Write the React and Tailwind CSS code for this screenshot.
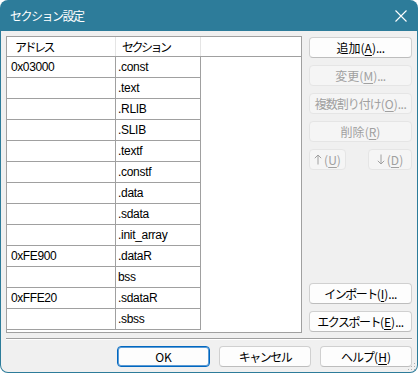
import React from 'react';

const rows = [
    ['0x03000', '.const'],
    ['', '.text'],
    ['', '.RLIB'],
    ['', '.SLIB'],
    ['', '.textf'],
    ['', '.constf'],
    ['', '.data'],
    ['', '.sdata'],
    ['', '.init_array'],
    ['0xFE900', '.dataR'],
    ['', 'bss'],
    ['0xFFE20', '.sdataR'],
    ['', '.sbss'],
];

const Arrow = ({ down }) => (
    <svg width="8" height="11" viewBox="0 0 8 11" className={`mr-[2px] ${down ? 'rotate-180' : ''}`}>
        <path d="M4 1V10.5M0.8 4.2L4 1L7.2 4.2" stroke="currentColor" strokeWidth="1" fill="none" />
    </svg>
);

const Btn = ({ label, mn, tail = '', disabled, primary, className = '', labelClass = '' }) => {
    const tone = disabled
        ? 'bg-[#f5f5f5] border-[#e5e5e5] text-[#a0a0a0]'
        : primary
            ? 'bg-[#fdfdfd] border-[#0067c0] text-black shadow-[inset_0_0_0_1px_#5b9bd5]'
            : 'bg-[#fdfdfd] border-[#d0d0d0] border-b-[#bdbdbd] text-black';
    return (
        <div className={`h-[21px] flex items-center justify-center rounded-[4px] border text-[12px] leading-none ${tone} ${className}`}>
            <span className={labelClass}>{label}</span>
            {mn && (
                <span>
                    (<span className="underline underline-offset-2">{mn}</span>)
                </span>
            )}
            {tail && <span className="tracking-[-0.5px]">{tail}</span>}
        </div>
    );
};

export default function App() {
    return (
        <div className="w-[418px] h-[373px] bg-white font-['Noto_Sans_CJK_JP',sans-serif]">
            <div className="relative w-full h-full flex flex-col bg-[#2d7c9a] rounded-[8px] px-px pb-px">
                {/* title bar */}
                <div className="h-[31px] shrink-0 flex items-center justify-between pl-[9px] pr-[9px] text-white">
                    <span className="text-[12px] tracking-[-1.5px]">セクション設定</span>
                    <svg width="12" height="12" viewBox="0 0 12 12" className="mr-px">
                        <path d="M0.5 0.5L11.5 11.5M11.5 0.5L0.5 11.5" stroke="white" strokeWidth="1.1" />
                    </svg>
                </div>

                {/* body */}
                <div className="relative flex-1 flex flex-col bg-[#f0f0f0] rounded-b-[7px] px-[5px] pt-[5px]">
                    <div className="flex gap-[7px]">
                        {/* list view */}
                        <div className="w-[296px] h-[297px] bg-white border border-[#a0a0a0] flex flex-col text-[12px] leading-none">
                            <div className="h-[20px] flex border-b border-[#a0a0a0] shrink-0">
                                <div className="w-[109px] border-r border-[#e5e5e5] flex items-center pl-[8px] tracking-[-2.5px]">アドレス</div>
                                <div className="w-[85px] border-r border-[#e5e5e5] flex items-center pl-[6px] tracking-[-2.5px]">セクション</div>
                                <div className="flex-1" />
                            </div>
                            {rows.map(([addr, sec], i) => (
                                <div key={i} className="w-[194px] h-[21px] flex border-b border-[#a0a0a0] font-['Liberation_Sans',sans-serif]">
                                    <div className="w-[109px] border-r border-[#a0a0a0] flex items-center pl-[4px] tracking-[-0.4px]">{addr}</div>
                                    <div className="w-[85px] border-r border-[#a0a0a0] flex items-center pl-[2px] tracking-[-0.3px]">{sec}</div>
                                </div>
                            ))}
                        </div>

                        {/* right buttons */}
                        <div className="w-[103px] h-[297px] flex flex-col justify-between pt-px pb-px">
                            <div className="flex flex-col gap-[7px]">
                                <Btn label="追加" mn="A" tail="..." />
                                <Btn label="変更" mn="M" tail="..." disabled />
                                <Btn label="複数割り付け" mn="O" tail="..." disabled labelClass="tracking-[-1px]" />
                                <Btn label="削除" mn="R" disabled />
                                <div className="flex justify-between">
                                    <Btn label={<Arrow />} mn="U" disabled className="w-[37px]" labelClass="flex" />
                                    <Btn label={<Arrow down />} mn="D" disabled className="w-[44px]" labelClass="flex" />
                                </div>
                            </div>
                            <div className="flex flex-col gap-[7px]">
                                <Btn label="インポート" mn="I" tail="..." labelClass="tracking-[-1.5px]" />
                                <Btn label="エクスポート" mn="E" tail="..." labelClass="tracking-[-1.5px]" />
                            </div>
                        </div>
                    </div>

                    {/* separator */}
                    <div className="mt-[5px] h-[2px] border-t border-[#a0a0a0] border-b border-b-white" />

                    {/* bottom buttons */}
                    <div className="mt-[6px] flex justify-end gap-[9px]">
                        <Btn label="OK" primary className="w-[93px]" />
                        <Btn label="キャンセル" className="w-[92px]" labelClass="tracking-[-1.5px]" />
                        <Btn label="ヘルプ" mn="H" className="w-[92px]" labelClass="tracking-[-1px]" />
                    </div>

                    {/* size grip */}
                    <svg width="8" height="8" viewBox="0 0 8 8" className="absolute right-[1px] bottom-[1px]">
                        <rect x="6" y="0" width="1" height="1" fill="#b0b0b0" />
                        <rect x="3" y="3" width="1" height="1" fill="#b0b0b0" />
                        <rect x="6" y="3" width="1" height="1" fill="#b0b0b0" />
                        <rect x="0" y="6" width="1" height="1" fill="#b0b0b0" />
                        <rect x="3" y="6" width="1" height="1" fill="#b0b0b0" />
                        <rect x="6" y="6" width="1" height="1" fill="#b0b0b0" />
                    </svg>
                </div>
            </div>
        </div>
    );
}
